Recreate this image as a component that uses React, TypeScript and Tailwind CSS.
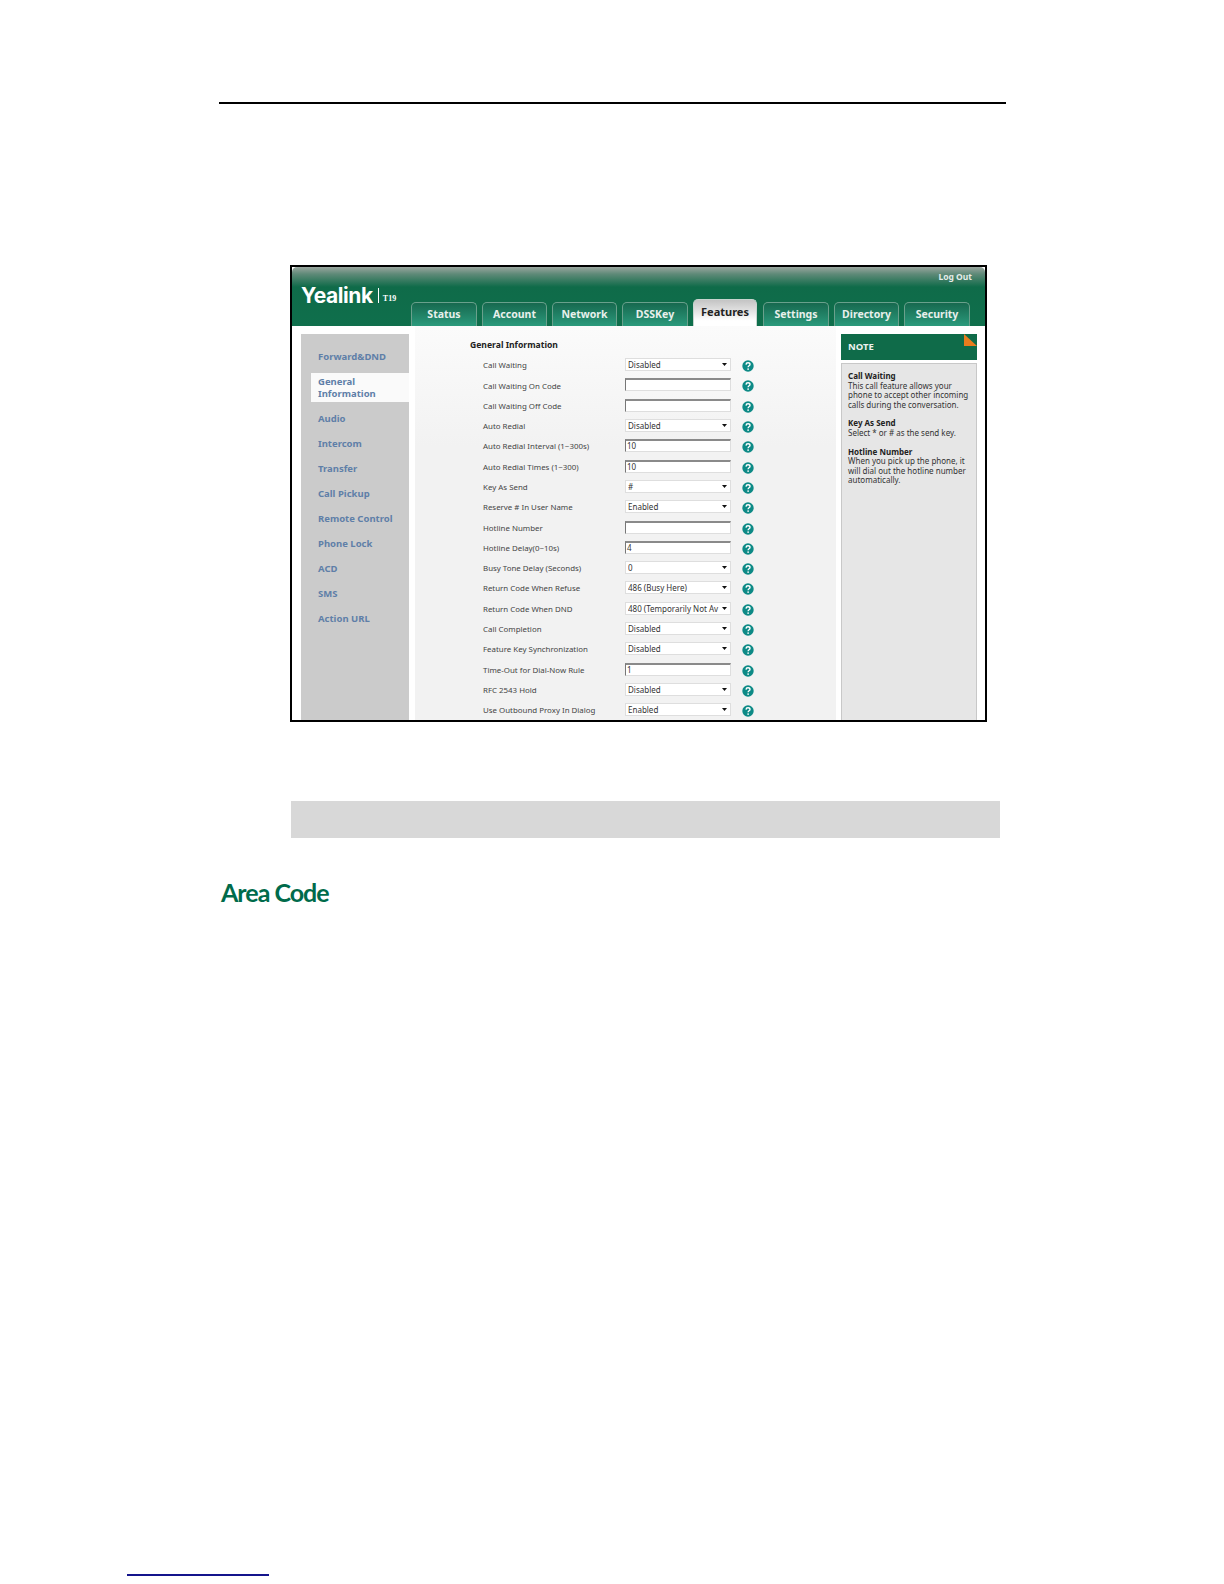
import type { ReactNode } from "react";

const uiFont = "font-['Noto_Sans',sans-serif]";

const tabs = [
  { name: "Status", w: "w-[66px]" },
  { name: "Account", w: "w-[65px]" },
  { name: "Network", w: "w-[65px]" },
  { name: "DSSKey", w: "w-[66px]" },
];
const tabsRight = [
  { name: "Settings", w: "w-[66px]" },
  { name: "Directory", w: "w-[65px]" },
  { name: "Security", w: "w-[66px]" },
];

const sideItems = ["Audio", "Intercom", "Transfer", "Call Pickup", "Remote Control", "Phone Lock", "ACD", "SMS", "Action URL"];

type Row = { label: string; kind: "select" | "input"; value?: string };

const rows: Row[] = [
  { label: "Call Waiting", kind: "select", value: "Disabled" },
  { label: "Call Waiting On Code", kind: "input" },
  { label: "Call Waiting Off Code", kind: "input" },
  { label: "Auto Redial", kind: "select", value: "Disabled" },
  { label: "Auto Redial Interval (1~300s)", kind: "input", value: "10" },
  { label: "Auto Redial Times (1~300)", kind: "input", value: "10" },
  { label: "Key As Send", kind: "select", value: "#" },
  { label: "Reserve # In User Name", kind: "select", value: "Enabled" },
  { label: "Hotline Number", kind: "input" },
  { label: "Hotline Delay(0~10s)", kind: "input", value: "4" },
  { label: "Busy Tone Delay (Seconds)", kind: "select", value: "0" },
  { label: "Return Code When Refuse", kind: "select", value: "486 (Busy Here)" },
  { label: "Return Code When DND", kind: "select", value: "480 (Temporarily Not Av" },
  { label: "Call Completion", kind: "select", value: "Disabled" },
  { label: "Feature Key Synchronization", kind: "select", value: "Disabled" },
  { label: "Time-Out for Dial-Now Rule", kind: "input", value: "1" },
  { label: "RFC 2543 Hold", kind: "select", value: "Disabled" },
  { label: "Use Outbound Proxy In Dialog", kind: "select", value: "Enabled" },
];

function HelpIcon() {
  return (
    <svg width="12" height="12" viewBox="0 0 12 12" className="ml-[11px] shrink-0">
      <circle cx="6" cy="6" r="5.7" fill="#0d8a86" />
      <path d="M4 4.6C4.1 3.4 5 2.8 6 2.8c1.2 0 2 .7 2 1.6C8 5.8 6.1 5.8 6.1 7.2" fill="none" stroke="#fff" strokeWidth="1.4" />
      <circle cx="6.1" cy="9.1" r=".85" fill="#fff" />
    </svg>
  );
}

function SelectBox({ value }: { value?: string }) {
  return (
    <div className="w-[106px] h-[13px] mb-[3px] bg-white border border-[#dedede] flex items-center justify-between pl-[2px] pr-[3px]">
      <span className="text-[8px] leading-[11px] text-[#333] whitespace-nowrap overflow-hidden w-[92px]">{value}</span>
      <svg width="5" height="3" viewBox="0 0 5 3" className="shrink-0">
        <path d="M0 0h5L2.5 3z" fill="#111" />
      </svg>
    </div>
  );
}

function InputBox({ value }: { value?: string }) {
  return (
    <div className="w-[106px] h-[13px] mb-[3px] bg-white border-t-2 border-l border-r border-b border-t-[#8a8a8a] border-l-[#777] border-r-[#dedede] border-b-[#dedede] flex items-center pl-px">
      <span className="text-[8px] leading-[10px] text-[#333]">{value}</span>
    </div>
  );
}

function NoteBlock({ title, children }: { title: string; children: ReactNode }) {
  return (
    <div className="text-[8px] leading-[9.6px] text-[#333] mb-[9px] whitespace-nowrap">
      <div className="font-bold text-[#222]">{title}</div>
      {children}
    </div>
  );
}

function Tab({ name, w }: { name: string; w: string }) {
  return (
    <div className={`${w} h-[24px] rounded-t-[5px] border border-b-0 border-[#6aa08c] bg-gradient-to-b from-[#17694f] to-[#2b9a7c] flex items-center justify-center text-[10.5px] font-bold text-[#e8f0ec]`}>
      {name}
    </div>
  );
}

function PhoneScreen() {
  return (
    <div className={`ml-[290px] w-[697px] h-[457px] border-2 border-black bg-white flex flex-col overflow-hidden ${uiFont}`}>
      {/* header with logo and tabs */}
      <div className="h-[59px] shrink-0 rounded-t-[5px] bg-[linear-gradient(#9aa69f_0px,#5f8a78_7px,#0f6b49_20px,#0f6f4c_100%)] flex relative">
        <div className="w-[119px] shrink-0 pl-[9px] pt-[15px] flex items-start text-white">
          <span className="font-['Inter',sans-serif] font-bold text-[21px] leading-[28px] tracking-[-0.4px]">Yealink</span>
          <div className="w-px h-[15px] bg-white ml-[5px] mt-[6px]" />
          <span className="font-['Liberation_Serif',serif] font-bold text-[8px] ml-[4px] mt-[13px] leading-none">T19</span>
        </div>
        <div className="flex items-end gap-[5px]">
          {tabs.map((t) => (
            <Tab key={t.name} {...t} />
          ))}
          <div className="w-[64px] mr-px h-[27px] rounded-t-[5px] border border-b-0 border-[#c8d4cf] bg-gradient-to-b from-[#c4c4c4] to-white to-80% flex items-start pt-[4px] justify-center text-[11px] font-bold text-[#222]">
            Features
          </div>
          {tabsRight.map((t) => (
            <Tab key={t.name} {...t} />
          ))}
        </div>
        <div className="absolute right-[13px] top-[5px] text-[8.5px] font-bold text-[#e6ece9] leading-[10px]">Log Out</div>
      </div>

      {/* body */}
      <div className="flex-1 flex min-h-0">
        <div className="w-[9px] shrink-0" />
        <div className="w-[108px] shrink-0 mt-[8px] bg-[#cbcbcb] pt-[10.5px] text-[9.5px] font-bold text-[#5f7fa8]">
          <div className="h-[25px] pl-[17px] flex items-center">Forward&amp;DND</div>
          <div className="mt-[3.5px] ml-[10px] h-[29px] bg-[#fafafa] pl-[7px] flex flex-col justify-center leading-[11.5px]">
            <span>General</span>
            <span>Information</span>
          </div>
          <div className="mt-[4.5px]">
            {sideItems.map((s) => (
              <div key={s} className="h-[25px] pl-[17px] flex items-center">
                {s}
              </div>
            ))}
          </div>
        </div>

        <div className="w-[6px] shrink-0" />
        <div className="w-[421px] shrink-0 bg-[linear-gradient(#fbfbfb,#f2f2f2_120px)] pt-[12px] pl-[55px]">
          <div className="h-[14px] leading-[14px] text-[8.6px] font-bold text-[#222] whitespace-nowrap">General Information</div>
          <div className="mt-[4px] pl-[13px]">
            {rows.map((r) => (
              <div key={r.label} className="h-[20.3px] flex items-center">
                <span className="w-[142px] shrink-0 text-[7.9px] text-[#444] whitespace-nowrap">{r.label}</span>
                {r.kind === "select" ? <SelectBox value={r.value} /> : <InputBox value={r.value} />}
                <HelpIcon />
              </div>
            ))}
          </div>
        </div>

        <div className="w-[5px] shrink-0" />
        <div className="w-[136px] shrink-0 mt-[8px] flex flex-col">
          <div className="h-[26px] bg-[#0f6b49] relative flex items-center pl-[7px] text-[9.5px] font-bold text-[#eef3f0] shrink-0">
            NOTE
            <div className="absolute right-0 top-0 w-[13px] h-[12px] bg-[#e87c1e] [clip-path:polygon(0_0,0_100%,100%_100%)]" />
          </div>
          <div className="mt-[3px] flex-1 bg-[#e6e6e6] border-t border-l border-r border-[#c8c8c8] pl-[6px] pt-[7px]">
            <NoteBlock title="Call Waiting">
              This call feature allows your
              <br />
              phone to accept other incoming
              <br />
              calls during the conversation.
            </NoteBlock>
            <NoteBlock title="Key As Send">Select * or # as the send key.</NoteBlock>
            <NoteBlock title="Hotline Number">
              When you pick up the phone, it
              <br />
              will dial out the hotline number
              <br />
              automatically.
            </NoteBlock>
          </div>
        </div>
      </div>
    </div>
  );
}

export default function App() {
  return (
    <div className="w-[1224px] h-[1584px] bg-white flex flex-col">
      <div className="mt-[102px] ml-[219px] w-[787px] h-[2px] bg-black" />
      <div className="mt-[161px]">
        <PhoneScreen />
      </div>
      <div className="mt-[79px] ml-[291px] w-[709px] h-[37px] bg-[#d8d8d8]" />
      <h2 className="mt-[37px] ml-[221px] text-[25px] leading-[34px] font-bold tracking-[-1px] text-[#006b4b] font-['Lato',sans-serif]">Area Code</h2>
      <div className="mt-auto mb-[8px] ml-[127px] w-[142px] h-[2px] bg-[#14148c]" />
    </div>
  );
}
